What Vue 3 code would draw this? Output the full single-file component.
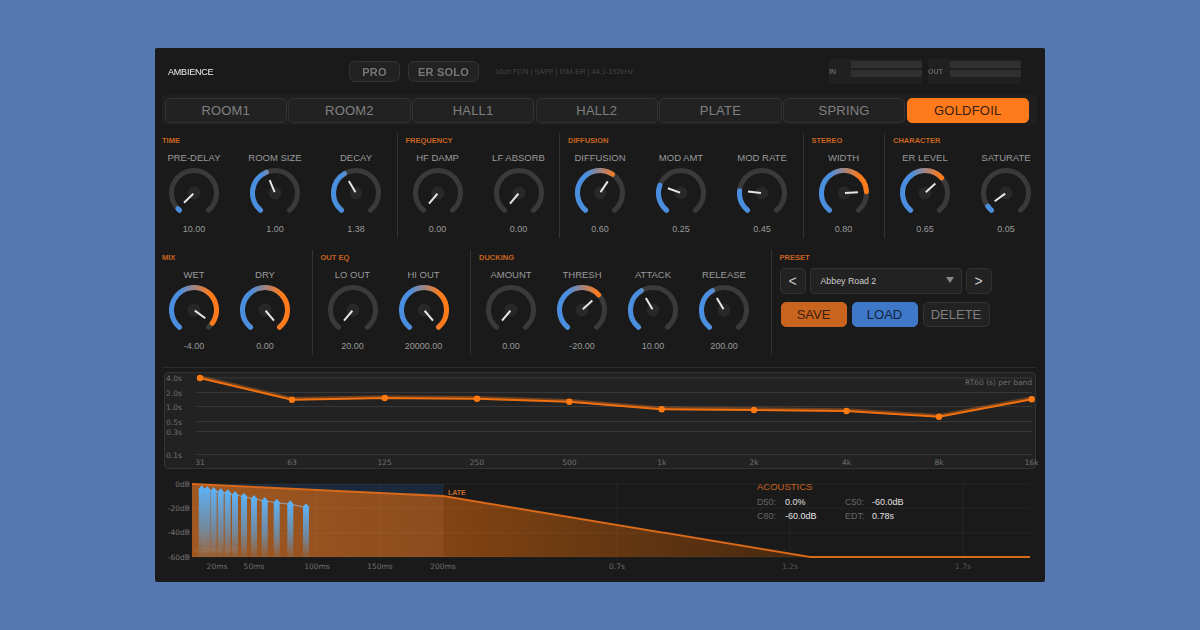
<template>
  <div class="page">
    <div class="panel">
      <header class="top">
        <div class="logo">AMBIENCE</div>
        <div class="mode-btns">
          <button type="button" class="mode-btn pro">PRO</button>
          <button type="button" class="mode-btn solo">ER SOLO</button>
        </div>
        <div class="info">16ch FDN | SAPF | ISM-ER | 44.1-192kHz</div>
        <div class="meters">
          <div v-for="m in meters" :key="m.label" class="meter" :class="m.cls">
            <span class="meter-label">{{ m.label }}</span>
            <div class="meter-bars">
              <i></i>
              <i></i>
            </div>
          </div>
        </div>
      </header>

      <nav class="tabs">
        <button
          v-for="t in tabs"
          :key="t"
          type="button"
          class="tab"
          :class="{ active: t === 'GOLDFOIL' }"
        >{{ t }}</button>
      </nav>

      <div v-for="(row, ri) in rows" :key="ri" class="knob-row" :class="'row-' + ri">
        <section v-for="sec in row" :key="sec.title" class="group">
          <h3 class="group-title">{{ sec.title }}</h3>
          <div class="group-knobs">
            <div v-for="k in sec.knobs" :key="k.label" class="knob">
              <div class="knob-label">{{ k.label }}</div>
              <svg class="knob-dial" viewBox="0 0 50 50" width="50" height="50">
                <defs>
                  <linearGradient id="knobGrad" gradientUnits="userSpaceOnUse" x1="0" y1="0" x2="50" y2="0">
                    <stop offset="0.22" stop-color="#4a8ee0" />
                    <stop offset="0.82" stop-color="#ff7a1a" />
                  </linearGradient>
                </defs>
                <path :d="arcPath(1)" class="knob-track" />
                <path v-if="k.v > 0" :d="arcPath(k.v)" class="knob-arc" />
                <circle cx="25" cy="25" r="6.5" class="knob-hub" />
                <line
                  :x1="needle(k.v, 1).x"
                  :y1="needle(k.v, 1).y"
                  :x2="needle(k.v, 14).x"
                  :y2="needle(k.v, 14).y"
                  class="knob-needle"
                />
              </svg>
              <div class="knob-value">{{ k.text }}</div>
            </div>
          </div>
        </section>
        <section v-if="ri === 1" class="group preset">
          <h3 class="group-title">PRESET</h3>
          <div class="preset-select-row">
            <button type="button" class="nav-btn">&lt;</button>
            <div class="preset-select">
              <span>Abbey Road 2</span>
              <i class="caret"></i>
            </div>
            <button type="button" class="nav-btn">&gt;</button>
          </div>
          <div class="preset-actions">
            <button type="button" class="act save">SAVE</button>
            <button type="button" class="act load">LOAD</button>
            <button type="button" class="act del">DELETE</button>
          </div>
        </section>
      </div>

      <div class="rule"></div>

      <div class="rt-graph">
        <svg viewBox="164 372 872 97" width="872" height="97">
          <g v-for="g in rtGrid" :key="g.t">
            <line x1="197" :y1="g.y" x2="1032" :y2="g.y" class="grid" />
            <text x="166" :y="g.y + 3" class="axis">{{ g.t }}</text>
          </g>
          <text x="1032" y="385" text-anchor="end" class="axis">RT60 (s) per band</text>
          <text v-for="p in rtPoints" :key="p.f" :x="p.x" y="464.5" text-anchor="middle" class="axis">{{ p.f }}</text>
          <polyline :points="rtLine" class="rt-glow" />
          <polyline :points="rtLine" class="rt-line" />
          <circle v-for="p in rtPoints" :key="'pt' + p.f" :cx="p.x" :cy="p.y" r="3.2" class="rt-dot" />
        </svg>
      </div>

      <div class="ir-graph">
        <svg viewBox="162 470 875 106" width="875" height="106">
          <defs>
            <linearGradient id="earlyFill" gradientUnits="userSpaceOnUse" x1="192" y1="0" x2="443" y2="0">
              <stop offset="0" stop-color="#a05820" />
              <stop offset="1" stop-color="#8c4c1e" />
            </linearGradient>
            <linearGradient id="lateFill" gradientUnits="userSpaceOnUse" x1="443" y1="0" x2="810" y2="0">
              <stop offset="0" stop-color="#824413" />
              <stop offset="1" stop-color="#45280f" />
            </linearGradient>
            <linearGradient id="erBar" x1="0" y1="0" x2="0" y2="1">
              <stop offset="0" stop-color="#5fb0f2" />
              <stop offset="0.55" stop-color="#5fa0d8" stop-opacity="0.7" />
              <stop offset="1" stop-color="#5fb0f2" stop-opacity="0.08" />
            </linearGradient>
          </defs>
          <rect x="192" y="484" width="251" height="73" class="er-zone" />
          <polygon points="192,484 443,496 443,557 192,557" fill="url(#earlyFill)" />
          <polygon points="443,496 810,557 443,557" fill="url(#lateFill)" />
          <line v-for="y in [484, 508, 533, 557]" :key="'h' + y" x1="192" :y1="y" x2="1030" :y2="y" class="ir-grid" />
          <line v-for="x in [317, 380, 443, 617, 790, 963]" :key="'v' + x" :x1="x" y1="484" :x2="x" y2="557" class="ir-grid" />
          <polyline points="192,484 443,496 810,557 1030,557" class="decay-line" />
          <text v-for="d in irDb" :key="d.t" x="190" :y="d.y" text-anchor="end" class="axis db">{{ d.t }}</text>
          <text v-for="l in irTime" :key="l.t" :x="l.x" y="569" text-anchor="middle" class="axis" :class="{ dim: l.dim }">{{ l.t }}</text>
          <text x="448" y="494.5" class="late">LATE</text>
          <text x="195" y="552" class="er-note">0-200ms (ER)</text>
          <rect v-for="e in erTaps" :key="'b' + e.x" :x="e.x - 3" :y="e.y" width="6" :height="557 - e.y" fill="url(#erBar)" />
          <polyline :points="erLine" class="er-line" />
          <polygon
            v-for="e in erTaps"
            :key="'d' + e.x"
            :points="`${e.x},${e.y - 4} ${e.x + 3.5},${e.y} ${e.x},${e.y + 4} ${e.x - 3.5},${e.y}`"
            class="er-dia"
          />
        </svg>
        <div class="acoustics">
          <div class="ac-title">ACOUSTICS</div>
          <div class="ac-grid">
            <template v-for="a in acoustics" :key="a.k">
              <span class="ac-key">{{ a.k }}</span>
              <span class="ac-val">{{ a.v }}</span>
            </template>
          </div>
        </div>
      </div>
    </div>
  </div>
</template>

<script setup>
import { computed } from 'vue'

const tabs = ['ROOM1', 'ROOM2', 'HALL1', 'HALL2', 'PLATE', 'SPRING', 'GOLDFOIL']

const meters = [
  { label: 'IN', cls: 'm-in' },
  { label: 'OUT', cls: 'm-out' },
]

const rows = [
  [
    { title: 'TIME', knobs: [
      { label: 'PRE-DELAY', text: '10.00', v: 0.02 },
      { label: 'ROOM SIZE', text: '1.00', v: 0.42 },
      { label: 'DECAY', text: '1.38', v: 0.39 },
    ] },
    { title: 'FREQUENCY', knobs: [
      { label: 'HF DAMP', text: '0.00', v: 0 },
      { label: 'LF ABSORB', text: '0.00', v: 0 },
    ] },
    { title: 'DIFFUSION', knobs: [
      { label: 'DIFFUSION', text: '0.60', v: 0.62 },
      { label: 'MOD AMT', text: '0.25', v: 0.25 },
      { label: 'MOD RATE', text: '0.45', v: 0.2 },
    ] },
    { title: 'STEREO', knobs: [
      { label: 'WIDTH', text: '0.80', v: 0.81 },
    ] },
    { title: 'CHARACTER', knobs: [
      { label: 'ER LEVEL', text: '0.65', v: 0.67 },
      { label: 'SATURATE', text: '0.05', v: 0.05 },
    ] },
  ],
  [
    { title: 'MIX', knobs: [
      { label: 'WET', text: '-4.00', v: 0.95 },
      { label: 'DRY', text: '0.00', v: 1 },
    ] },
    { title: 'OUT EQ', knobs: [
      { label: 'LO OUT', text: '20.00', v: 0 },
      { label: 'HI OUT', text: '20000.00', v: 1 },
    ] },
    { title: 'DUCKING', knobs: [
      { label: 'AMOUNT', text: '0.00', v: 0 },
      { label: 'THRESH', text: '-20.00', v: 0.67 },
      { label: 'ATTACK', text: '10.00', v: 0.39 },
      { label: 'RELEASE', text: '200.00', v: 0.39 },
    ] },
  ],
]

const SWEEP = 280
const R = 22.5

function polar(angle, r) {
  const a = (angle - 90) * Math.PI / 180
  return { x: 25 + r * Math.cos(a), y: 25 + r * Math.sin(a) }
}

function arcPath(v) {
  const start = polar(-140, R)
  const end = polar(-140 + SWEEP * v, R)
  const large = SWEEP * v > 180 ? 1 : 0
  return `M${start.x.toFixed(2)} ${start.y.toFixed(2)}A${R} ${R} 0 ${large} 1 ${end.x.toFixed(2)} ${end.y.toFixed(2)}`
}

function needle(v, r) {
  return polar(-140 + SWEEP * v, r)
}

const rtGrid = [
  { t: '4.0s', y: 378 },
  { t: '2.0s', y: 392.5 },
  { t: '1.0s', y: 406.5 },
  { t: '0.5s', y: 421.5 },
  { t: '0.3s', y: 431.5 },
  { t: '0.1s', y: 454.5 },
]

const rtPoints = [
  { f: '31', x: 200, y: 378 },
  { f: '63', x: 292, y: 399.7 },
  { f: '125', x: 384.7, y: 398 },
  { f: '250', x: 477, y: 398.7 },
  { f: '500', x: 569.3, y: 401.7 },
  { f: '1k', x: 661.7, y: 409.3 },
  { f: '2k', x: 754, y: 410 },
  { f: '4k', x: 846.5, y: 411 },
  { f: '8k', x: 939, y: 416.7 },
  { f: '16k', x: 1031.7, y: 399.3 },
]

const rtLine = computed(() => rtPoints.map(p => `${p.x},${p.y}`).join(' '))

const irDb = [
  { t: '0dB', y: 487 },
  { t: '-20dB', y: 511 },
  { t: '-40dB', y: 535 },
  { t: '-60dB', y: 560 },
]

const irTime = [
  { t: '20ms', x: 217 },
  { t: '50ms', x: 254 },
  { t: '100ms', x: 317 },
  { t: '150ms', x: 380 },
  { t: '200ms', x: 443 },
  { t: '0.7s', x: 617 },
  { t: '1.2s', x: 790, dim: true },
  { t: '1.7s', x: 963, dim: true },
]

const erTaps = [
  { x: 201.7, y: 489.3 },
  { x: 207.3, y: 490 },
  { x: 213.7, y: 491 },
  { x: 220.7, y: 492.3 },
  { x: 227.7, y: 493.3 },
  { x: 235, y: 495 },
  { x: 244, y: 496.7 },
  { x: 254, y: 499 },
  { x: 264.7, y: 501 },
  { x: 276.7, y: 502.7 },
  { x: 290.3, y: 504.3 },
  { x: 306, y: 507.3 },
]

const erLine = computed(() => erTaps.map(e => `${e.x},${e.y}`).join(' '))

const acoustics = [
  { k: 'D50:', v: '0.0%' },
  { k: 'C50:', v: '-60.0dB' },
  { k: 'C80:', v: '-60.0dB' },
  { k: 'EDT:', v: '0.78s' },
]
</script>

<style>
body {
  background: #5578b0;
}
</style>

<style scoped>
.page {
  height: 630px;
  padding-top: 48px;
  box-sizing: border-box;
  background: #5578b0;
  font-family: "Liberation Sans", Arial, sans-serif;
  overflow: hidden;
}

.panel {
  width: 890px;
  height: 534px;
  margin-left: 155px;
  padding: 0 8px 0 7px;
  box-sizing: border-box;
  background: #1a1a1a;
  border-radius: 2px;
  filter: blur(0.3px);
}

.top {
  height: 47px;
  display: flex;
  align-items: center;
  position: relative;
}

.logo {
  width: 187px;
  padding-left: 6px;
  box-sizing: border-box;
  font-size: 9px;
  letter-spacing: -0.2px;
  color: #eee;
}

.mode-btns {
  display: flex;
  gap: 8px;
}

.mode-btn {
  height: 21px;
  padding: 0;
  background: #222;
  border: 1px solid #333;
  border-radius: 6px;
  color: #777;
  font: bold 11px "Liberation Sans", Arial, sans-serif;
  letter-spacing: 0.2px;
}
.mode-btn.pro { width: 51px; }
.mode-btn.solo { width: 71px; }

.info {
  margin-left: 16px;
  font-size: 7.4px;
  color: #444;
  white-space: nowrap;
}

.meters {
  margin-left: auto;
  margin-right: 16px;
  display: flex;
  gap: 6px;
}

.meter {
  height: 25px;
  display: flex;
  align-items: flex-start;
  background: #202020;
  border-radius: 2px;
}
.m-in { width: 93px; }
.m-out { width: 93px; }

.meter-label {
  flex: none;
  width: 22px;
  font-size: 7px;
  font-weight: bold;
  line-height: 25px;
  color: #666;
}

.meter-bars {
  flex: 1;
  padding-top: 2px;
  display: flex;
  flex-direction: column;
  gap: 2px;
}
.meter-bars i {
  display: block;
  height: 7px;
  background: #303030;
  border-radius: 1px;
}

.tabs {
  height: 30px;
  padding: 2.5px 8px 2.5px 2.5px;
  box-sizing: border-box;
  display: flex;
  gap: 1.25px;
  background: #1f1f1f;
  margin-bottom: 8px;
}

.tab {
  flex: 1;
  min-width: 0;
  padding: 0;
  background: #222;
  border: 1px solid #333;
  border-radius: 5px;
  color: #808080;
  font: 13px "Liberation Sans", Arial, sans-serif;
  letter-spacing: 0.2px;
}
.tab.active {
  background: #ff7a1a;
  border-color: #ff7a1a;
  color: #3a2010;
}

.knob-row {
  height: 105px;
  display: flex;
  gap: 8px;
  margin-bottom: 12px;
}

.group {
  padding-right: 8.5px;
  border-right: 1px solid #333;
}
.group:last-child {
  border-right: none;
  padding-right: 0;
}
.row-1 .group {
  padding-right: 14.5px;
}

.group-title {
  margin: 0;
  height: 19px;
  line-height: 15px;
  font-size: 7.5px;
  font-weight: bold;
  color: #c8641e;
}

.group-knobs {
  display: flex;
  gap: 17px;
}
.row-1 .group-knobs {
  gap: 7px;
}

.knob {
  width: 64px;
  display: flex;
  flex-direction: column;
  align-items: center;
}

.knob-label {
  height: 16px;
  line-height: 12px;
  font-size: 9.5px;
  color: #999;
  white-space: nowrap;
}

.knob-dial {
  display: block;
}

.knob-track,
.knob-arc {
  fill: none;
  stroke-width: 5;
  stroke-linecap: round;
}
.knob-track { stroke: #3a3a3a; }
.knob-arc { stroke: url(#knobGrad); }
.knob-hub { fill: #282828; }
.knob-needle {
  stroke: #e6e6e6;
  stroke-width: 2;
}

.knob-value {
  margin-top: 5px;
  line-height: 12px;
  font-size: 9px;
  color: #999;
  white-space: nowrap;
}

.preset {
  width: 240px;
}
.preset .group-title {
  height: 18px;
}

.preset-select-row {
  display: flex;
  gap: 4px;
  align-items: center;
}

.nav-btn {
  width: 26px;
  height: 25.5px;
  padding: 0;
  background: #222;
  border: 1px solid #333;
  border-radius: 5px;
  color: #ccc;
  font: 14px "Liberation Sans", Arial, sans-serif;
}

.preset-select {
  width: 152px;
  height: 25.5px;
  padding: 0 7px 0 10px;
  box-sizing: border-box;
  display: flex;
  align-items: center;
  justify-content: space-between;
  background: #222;
  border: 1px solid #333;
  border-radius: 3px;
  color: #ccc;
  font-size: 8.8px;
}

.caret {
  width: 0;
  height: 0;
  border-left: 4px solid transparent;
  border-right: 4px solid transparent;
  border-top: 6px solid #888;
  margin-bottom: 2px;
}

.preset-actions {
  margin-top: 8px;
  margin-left: 1px;
  display: flex;
  gap: 5px;
}

.act {
  width: 66px;
  height: 25.5px;
  padding: 0;
  border-radius: 5px;
  font: 13px "Liberation Sans", Arial, sans-serif;
}
.act.save { background: #c8641e; border: 1px solid #c8641e; color: #3a2010; }
.act.load { background: #3f78c8; border: 1px solid #3f78c8; color: #12233c; }
.act.del { width: 67px; background: #222; border: 1px solid #333; color: #808080; }

.rule {
  height: 1px;
  background: #2c2c2c;
}

.rt-graph {
  margin: 4px 0 0 2px;
  width: 872px;
  height: 97px;
  box-sizing: border-box;
  background: #222;
  border: 1px solid #333;
  border-radius: 4px;
  overflow: visible;
  position: relative;
}
.rt-graph svg {
  display: block;
  position: absolute;
  left: -1px;
  top: -1px;
  overflow: visible;
}

.grid {
  stroke: #383838;
  stroke-width: 1;
}

.axis {
  font: 7.5px "DejaVu Sans", sans-serif;
  fill: #707070;
}
.axis.dim {
  fill: #555;
}

.rt-glow {
  fill: none;
  stroke: #ff7a1a;
  stroke-opacity: 0.35;
  stroke-width: 3.5;
  transform: translateY(-1px);
}
.rt-line {
  fill: none;
  stroke: #f07010;
  stroke-width: 2;
}
.rt-dot {
  fill: #ff7a10;
}

.ir-graph {
  margin-top: 1px;
  position: relative;
}
.ir-graph svg {
  display: block;
}

.er-zone { fill: #1a2a3c; }
.ir-grid {
  stroke: #fff;
  stroke-opacity: 0.05;
  stroke-width: 1;
}
.decay-line {
  fill: none;
  stroke: #d8691a;
  stroke-width: 2;
}
.db { fill: #777; }
.late {
  font: bold 7px "Liberation Sans", sans-serif;
  fill: #c96a28;
}
.er-note {
  font: 7px "Liberation Sans", sans-serif;
  fill: #fff;
  fill-opacity: 0.14;
}
.er-line {
  fill: none;
  stroke: #9ab8d0;
  stroke-opacity: 0.8;
  stroke-width: 1;
}
.er-dia { fill: #5fb0f2; }

.acoustics {
  position: absolute;
  left: 595px;
  top: 11px;
}
.ac-title {
  font-size: 9.5px;
  line-height: 12px;
  color: #c8641e;
}
.ac-grid {
  margin-top: 3px;
  display: grid;
  grid-template-columns: 28px 60px 27px auto;
  row-gap: 2px;
  font-size: 9px;
  line-height: 12px;
}
.ac-key { color: #666; }
.ac-val { color: #e0e0e0; }
</style>
